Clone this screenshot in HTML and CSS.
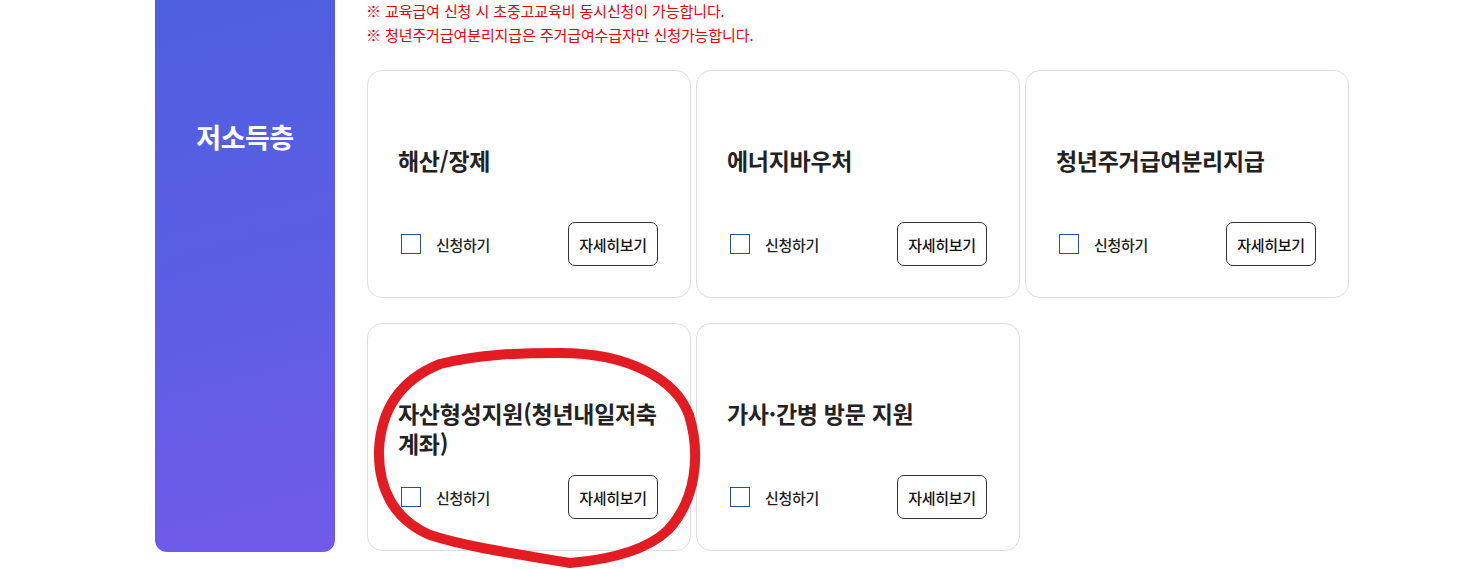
FILE: index.html
```html
<!DOCTYPE html>
<html lang="ko">
<head>
<meta charset="utf-8">
<title>저소득층</title>
<link rel="stylesheet" href="styles.css">
</head>
<body>
<div class="section">
  <aside class="side">
    <h2 class="side-title">저소득층</h2>
  </aside>
  <div class="content">
    <ul class="notes">
      <li>※ 교육급여 신청 시 초중고교육비 동시신청이 가능합니다.</li>
      <li>※ 청년주거급여분리지급은 주거급여수급자만 신청가능합니다.</li>
    </ul>
    <div class="grid">
      <div class="card">
        <h3 class="card-title">해산/장제</h3>
        <div class="card-foot">
          <label class="apply"><span class="box"></span>신청하기</label>
          <button class="more">자세히보기</button>
        </div>
      </div>
      <div class="card">
        <h3 class="card-title">에너지바우처</h3>
        <div class="card-foot">
          <label class="apply"><span class="box"></span>신청하기</label>
          <button class="more">자세히보기</button>
        </div>
      </div>
      <div class="card">
        <h3 class="card-title">청년주거급여분리지급</h3>
        <div class="card-foot">
          <label class="apply"><span class="box"></span>신청하기</label>
          <button class="more">자세히보기</button>
        </div>
      </div>
      <div class="card">
        <h3 class="card-title">자산형성지원(청년내일저축계좌)</h3>
        <div class="card-foot">
          <label class="apply"><span class="box"></span>신청하기</label>
          <button class="more">자세히보기</button>
        </div>
      </div>
      <div class="card">
        <h3 class="card-title">가사·간병 방문 지원</h3>
        <div class="card-foot">
          <label class="apply"><span class="box"></span>신청하기</label>
          <button class="more">자세히보기</button>
        </div>
      </div>
    </div>
  </div>
</div>
<svg class="markup" width="1461" height="569" viewBox="0 0 1461 569" aria-hidden="true">
  <path d="M560 353 C630 353 676 380 689 415 C701 455 696 500 668 530 C645 552 605 560 570 563 C530 556 470 548 430 535 C395 520 378 490 379 450 C381 410 400 380 440 364 C480 354 520 353 560 353 Z" fill="none" stroke="#e31b23" stroke-width="10" stroke-linecap="round" stroke-linejoin="round"/>
</svg>
</body>
</html>
```

FILE: styles.css
```css
* { box-sizing: border-box; }
html, body {
  margin: 0;
  padding: 0;
  background: #fff;
  font-family: "Noto Sans CJK KR", "Noto Sans", sans-serif;
  color: #222;
  overflow: hidden;
}
body { position: relative; width: 1461px; height: 569px; }

.section {
  display: flex;
  align-items: flex-start;
  padding-left: 155px;
}

.side {
  width: 180px;
  height: 552px;
  flex: none;
  border-radius: 0 0 12px 12px;
  background: linear-gradient(165deg, #4e5fe0 0%, #5c5ee4 50%, #725aea 100%);
  padding-top: 117px;
  text-align: center;
}
.side-title {
  margin: 0;
  color: #fff;
  font-size: 27px;
  font-weight: 700;
  line-height: 40px;
  letter-spacing: -0.5px;
}

.content {
  margin-left: 31px;
}

.notes {
  list-style: none;
  margin: -1px 0 0;
  padding: 0;
  color: #e3000f;
  font-size: 15px;
  line-height: 24px;
  letter-spacing: -0.1px;
}

.grid {
  margin-top: 23px;
  margin-left: 1px;
  display: grid;
  grid-template-columns: repeat(3, 324px);
  column-gap: 5px;
  row-gap: 25px;
}

.card {
  height: 228px;
  border: 1px solid #dedede;
  border-radius: 15px;
  padding: 74px 30px 31px 30px;
  display: flex;
  flex-direction: column;
}
.card-title {
  margin: 0;
  height: 77px;
  font-size: 23px;
  font-weight: 700;
  line-height: 30px;
  color: #222;
  letter-spacing: -0.3px;
}
.card-foot {
  display: flex;
  align-items: center;
  justify-content: space-between;
  padding-left: 3px;
  padding-right: 2px;
}
.apply {
  display: flex;
  align-items: center;
  font-size: 15px;
  font-weight: 500;
  color: #222;
  letter-spacing: -0.3px;
}
.box {
  width: 20px;
  height: 20px;
  border: 1px solid #2d4a96;
  margin-right: 15px;
  background: #fff;
}
.more {
  width: 90px;
  height: 44px;
  border: 1px solid #333;
  border-radius: 7px;
  background: #fff;
  font-family: inherit;
  font-size: 15px;
  font-weight: 500;
  color: #111;
  letter-spacing: -0.3px;
  padding: 0;
}

.markup {
  position: absolute;
  left: 0;
  top: 0;
  pointer-events: none;
}
```
